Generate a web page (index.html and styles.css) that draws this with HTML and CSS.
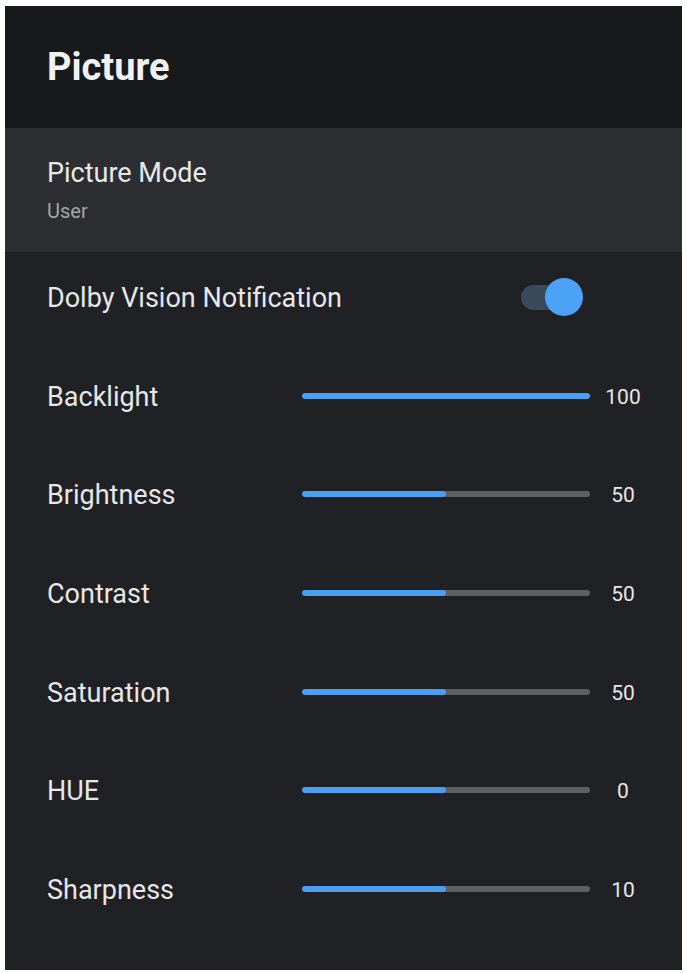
FILE: index.html
```html
<!DOCTYPE html>
<html>
<head>
<meta charset="utf-8">
<link rel="stylesheet" href="styles.css">
</head>
<body>
<div class="panel">
  <header class="head"><h1 class="title">Picture</h1></header>
  <div class="mode">
    <div class="mode-label">Picture Mode</div>
    <div class="mode-value">User</div>
  </div>
  <div class="list">
    <div class="row">
      <div class="label">Dolby Vision Notification</div>
      <div class="toggle"><span class="track"></span><span class="thumb"></span></div>
    </div>
    <div class="row">
      <div class="label">Backlight</div>
      <div class="slider"><div class="fill" style="width:100%"></div></div>
      <div class="value">100</div>
    </div>
    <div class="row">
      <div class="label">Brightness</div>
      <div class="slider"><div class="fill" style="width:50%"></div></div>
      <div class="value">50</div>
    </div>
    <div class="row">
      <div class="label">Contrast</div>
      <div class="slider"><div class="fill" style="width:50%"></div></div>
      <div class="value">50</div>
    </div>
    <div class="row">
      <div class="label">Saturation</div>
      <div class="slider"><div class="fill" style="width:50%"></div></div>
      <div class="value">50</div>
    </div>
    <div class="row">
      <div class="label">HUE</div>
      <div class="slider"><div class="fill" style="width:50%"></div></div>
      <div class="value">0</div>
    </div>
    <div class="row">
      <div class="label">Sharpness</div>
      <div class="slider"><div class="fill" style="width:50%"></div></div>
      <div class="value">10</div>
    </div>
  </div>
</div>
</body>
</html>
```
FILE: styles.css
```css
html, body {
  margin: 0;
  padding: 0;
  background: #ffffff;
}
body {
  padding: 6px 5px 4px 5px;
  font-family: Roboto, "Liberation Sans", sans-serif;
  color: #e6e7e9;
}
.panel {
  width: 677px;
  height: 964px;
  background: #202124;
  display: flex;
  flex-direction: column;
  overflow: hidden;
}
.head {
  height: 122px;
  background: #18191b;
  display: flex;
  align-items: center;
  padding-left: 42px;
  box-sizing: border-box;
}
.title {
  margin: 0;
  font-size: 38px;
  font-weight: 700;
  color: #f1f2f3;
}
.mode {
  height: 125px;
  background: #2c2e31;
  box-sizing: border-box;
  padding: 29px 0 0 42px;
  border-bottom: 1px solid #1b1c1e;
}
.mode-label {
  font-size: 27px;
  line-height: 32px;
  color: #e8e9eb;
}
.mode-value {
  font-size: 20px;
  line-height: 26px;
  margin-top: 9px;
  color: #a3a6aa;
}
.list {
  display: flex;
  flex-direction: column;
  padding-top: 23px;
  gap: 54.7px;
}
.row {
  height: 44px;
  display: flex;
  align-items: center;
  padding-left: 42px;
}
.label {
  width: 255px;
  flex: none;
  font-size: 27px;
  color: #e6e7e9;
  white-space: nowrap;
}
.slider {
  width: 288px;
  height: 6px;
  background: #5d5f62;
  border-radius: 3px;
  overflow: hidden;
  margin-top: -2px;
}
.fill {
  height: 100%;
  background: #4b9ff0;
  border-radius: 3px;
}
.value {
  width: 66px;
  text-align: center;
  font-size: 21px;
  color: #e6e7e9;
}
.toggle {
  position: relative;
  width: 62px;
  height: 38px;
  margin-left: 219px;
  margin-top: -2px;
}
.track {
  position: absolute;
  left: 0;
  top: 6.5px;
  width: 50px;
  height: 25px;
  border-radius: 13px;
  background: #3a4a5d;
}
.thumb {
  position: absolute;
  left: 24px;
  top: 0;
  width: 38px;
  height: 38px;
  border-radius: 50%;
  background: #4ca2f6;
}
```
